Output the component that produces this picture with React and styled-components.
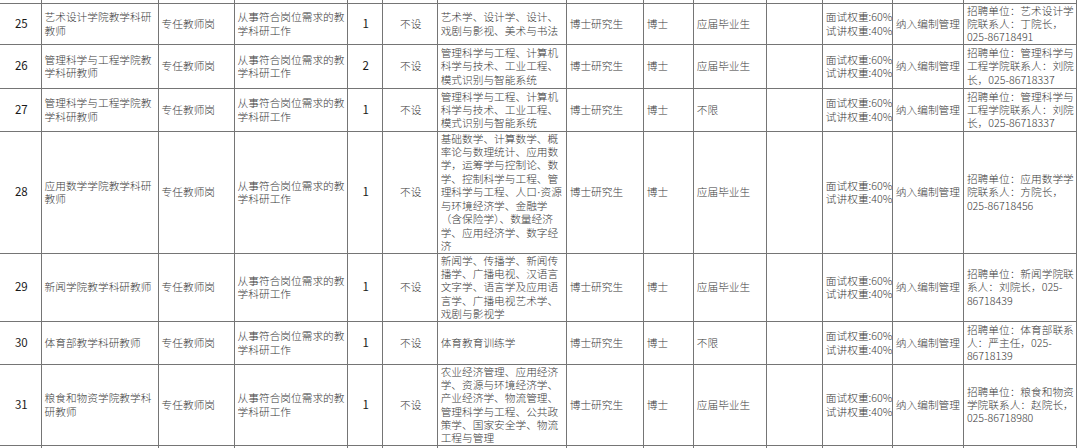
import React from 'react';
import styled, { createGlobalStyle } from 'styled-components';

const GlobalStyle = createGlobalStyle`
  html, body {
    margin: 0;
    padding: 0;
    background: #ffffff;
  }
  body {
    width: 1080px;
    height: 448px;
    overflow: hidden;
  }
`;

const Sheet = styled.div`
  width: 1080px;
  height: 448px;
  overflow: hidden;
  background: #ffffff;
`;

const Table = styled.table`
  border-collapse: collapse;
  table-layout: fixed;
  width: 1077px;
  font-family: "Noto Sans CJK SC", sans-serif;
  font-size: 10.7px;
  font-weight: 300;
  line-height: 13.3px;
  color: #3a3a3a;
`;

const Row = styled.tr`
  height: ${(p) => p.$h}px;
`;

const Cell = styled.td`
  border: 1px solid #757575;
  padding: 0 1px 0 3px;
  vertical-align: middle;
  white-space: pre;
  overflow: hidden;
  text-align: ${(p) => (p.$center ? 'center' : 'left')};
  font-size: ${(p) => (p.$num ? '11.5px' : 'inherit')};
  font-weight: ${(p) => (p.$num ? 400 : 'inherit')};
  color: ${(p) => (p.$num ? '#1a1a1a' : 'inherit')};

  &:first-child {
    border-left: none;
  }
`;

const EdgeCell = styled(Cell)`
  border-top: none;
`;

// the sheet's middle dot is a narrow Latin glyph, not the full-width CJK one
const Dot = styled.span`
  font-family: "Liberation Sans", sans-serif;
`;

const widths = [41, 117, 76, 113, 35, 55, 129, 77, 50, 73, 56, 70, 71, 113];

const DUTY = '从事符合岗位需求的教\n学科研工作';
const WEIGHT = '面试权重:60%\n试讲权重:40%';
const MGMT = '纳入编制管理';

const rows = [
  {
    no: '25',
    h: 41,
    name: '艺术设计学院教学科研\n教师',
    count: '1',
    major: '艺术学、设计学、设计、\n戏剧与影视、美术与书法',
    source: '应届毕业生',
    contact: '招聘单位：艺术设计学\n院联系人：丁院长，\n025-86718491',
  },
  {
    no: '26',
    h: 44,
    name: '管理科学与工程学院教\n学科研教师',
    count: '2',
    major: '管理科学与工程、计算机\n科学与技术、工业工程、\n模式识别与智能系统',
    source: '应届毕业生',
    contact: '招聘单位：管理科学与\n工程学院联系人：刘院\n长，025-86718337',
  },
  {
    no: '27',
    h: 43,
    name: '管理科学与工程学院教\n学科研教师',
    count: '1',
    major: '管理科学与工程、计算机\n科学与技术、工业工程、\n模式识别与智能系统',
    source: '不限',
    contact: '招聘单位：管理科学与\n工程学院联系人：刘院\n长，025-86718337',
  },
  {
    no: '28',
    h: 122,
    name: '应用数学学院教学科研\n教师',
    count: '1',
    major:
      '基础数学、计算数学、概\n率论与数理统计、应用数\n学，运筹学与控制论、数\n学、控制科学与工程、管\n理科学与工程、人口·资源\n与环境经济学、金融学\n（含保险学）、数量经济\n学、应用经济学、数字经\n济',
    source: '应届毕业生',
    contact: '招聘单位：应用数学学\n院联系人：方院长，\n025-86718456',
  },
  {
    no: '29',
    h: 68,
    name: '新闻学院教学科研教师',
    count: '1',
    major: '新闻学、传播学、新闻传\n播学、广播电视、汉语言\n文字学、语言学及应用语\n言学、广播电视艺术学、\n戏剧与影视学',
    source: '应届毕业生',
    contact: '招聘单位：新闻学院联\n系人：刘院长，025-\n86718439',
  },
  {
    no: '30',
    h: 43,
    name: '体育部教学科研教师',
    count: '1',
    major: '体育教育训练学',
    source: '不限',
    contact: '招聘单位：体育部联系\n人：严主任，025-\n86718139',
  },
  {
    no: '31',
    h: 81,
    name: '粮食和物资学院教学科\n研教师',
    count: '1',
    major: '农业经济管理、应用经济\n学、资源与环境经济学、\n产业经济学、物流管理、\n管理科学与工程、公共政\n策学、国家安全学、物流\n工程与管理',
    source: '应届毕业生',
    contact: '招聘单位：粮食和物资\n学院联系人：赵院长，\n025-86718980',
  },
];

const withDots = (text) =>
  text.split('·').flatMap((part, i) => (i === 0 ? [part] : [<Dot key={i}>·</Dot>, part]));

const App = () => (
  <Sheet>
    <GlobalStyle />
    <Table>
      <colgroup>
        {widths.map((w, i) => (
          <col key={i} style={{ width: w }} />
        ))}
      </colgroup>
      <tbody>
        <Row $h={3}>
          {widths.map((w, i) => (
            <EdgeCell key={i} />
          ))}
        </Row>
        {rows.map((r) => (
          <Row key={r.no} $h={r.h}>
            <Cell $center $num>{r.no}</Cell>
            <Cell>{r.name}</Cell>
            <Cell>专任教师岗</Cell>
            <Cell>{DUTY}</Cell>
            <Cell $center $num>{r.count}</Cell>
            <Cell $center>不设</Cell>
            <Cell>{withDots(r.major)}</Cell>
            <Cell>博士研究生</Cell>
            <Cell>博士</Cell>
            <Cell>{r.source}</Cell>
            <Cell />
            <Cell>{WEIGHT}</Cell>
            <Cell>{MGMT}</Cell>
            <Cell>{r.contact}</Cell>
          </Row>
        ))}
        <Row $h={40}>
          {widths.map((w, i) => (
            <Cell key={i} />
          ))}
        </Row>
      </tbody>
    </Table>
  </Sheet>
);

export default App;
